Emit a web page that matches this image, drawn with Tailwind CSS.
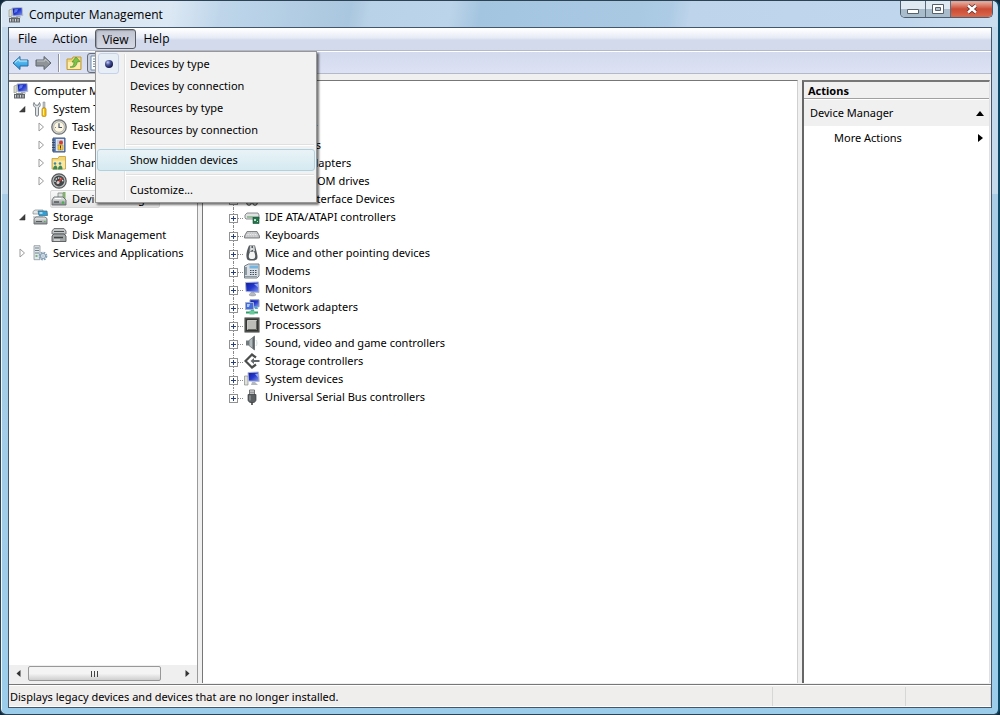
<!DOCTYPE html>
<html lang="en">
<head>
<meta charset="utf-8">
<title>Computer Management</title>
<script src="https://cdn.jsdelivr.net/npm/@tailwindcss/browser@4"></script>
</head>
<body class="h-screen overflow-hidden bg-[#10283c] font-['Noto_Sans','Open_Sans',sans-serif] text-[11px] leading-[18px] text-black">

<svg class="absolute size-0" aria-hidden="true">
  <defs>
    <linearGradient id="scr" x1="0" y1="0" x2="1" y2="1"><stop offset="0" stop-color="#0c1a9c"/><stop offset=".5" stop-color="#2438cc"/><stop offset="1" stop-color="#8fa4f4"/></linearGradient>
    <linearGradient id="metal" x1="0" y1="0" x2="0" y2="1"><stop offset="0" stop-color="#f4f5f5"/><stop offset="1" stop-color="#85898c"/></linearGradient>
    <linearGradient id="blue" x1="0" y1="0" x2="0" y2="1"><stop offset="0" stop-color="#7fd4fb"/><stop offset="1" stop-color="#1a8fdd"/></linearGradient>
    <radialGradient id="ball" cx=".35" cy=".3" r=".7"><stop offset="0" stop-color="#c4cef4"/><stop offset=".45" stop-color="#4a569c"/><stop offset="1" stop-color="#14194c"/></radialGradient>
  </defs>
  <symbol id="i-mgmt" viewBox="0 0 16 16">
    <path d="M1 3l3-1v7l-3 1z" fill="#d9dccb" stroke="#8b8f86" stroke-width=".6"/>
    <path d="M4 1l10-.5.8 8L5 9z" fill="url(#scr)" stroke="#b4bccb" stroke-width="1"/>
    <path d="M6.500 2.200l3.500-.2-1 3-3 1z" fill="#5d78e8"/>
    <path d="M8 9l4-.2 1 1.700H8z" fill="#a9adb4"/>
    <path d="M1 11h11v4.500H1z" fill="#60656a"/><path d="M2.500 12v2.500M5 12v2.500M7.500 12v2.500M10 12v2.500" stroke="#d5d8da"/><path d="M3 10h7v1H3z" fill="#8b9093"/>
  </symbol>
  <symbol id="i-tools" viewBox="0 0 16 16">
    <path d="M2 1.500C.5 4 2 6 3.500 6.500V14c0 1.600 3 1.600 3 0V6.500C8 6 9 4 7.500 1.500L6.300 4.200H3.500z" fill="#dfe3e6" stroke="#70797f" stroke-width=".9"/>
    <path d="M11 1h2v6h-2z" fill="#c0c5c8" stroke="#7d8386" stroke-width=".5"/>
    <rect x="10" y="7" width="4" height="8.500" rx="1.300" fill="#f5c21c" stroke="#b88406" stroke-width=".8"/>
    <path d="M11.500 8v6" stroke="#fff0a4"/>
  </symbol>
  <symbol id="i-clock" viewBox="0 0 16 16">
    <circle cx="8" cy="8" r="7.200" fill="#d9d9d3" stroke="#6f7274" stroke-width="1.300"/><circle cx="8" cy="8" r="5.300" fill="#fcf6e1" stroke="#a3a39c" stroke-width=".7"/>
    <path d="M8 4.200V8.500h3" fill="none" stroke="#46566d" stroke-width="1.200"/><path d="M4 8.500h1" stroke="#888"/>
  </symbol>
  <symbol id="i-event" viewBox="0 0 16 16">
    <path d="M2 1h12v14H2z" fill="#6e8fc4" stroke="#3d5684"/><path d="M5 2h8v12H5z" fill="#dfe6f1"/>
    <path d="M6 4h6M6 6h6M6 8h6" stroke="#8ba3c8" stroke-width=".7"/>
    <path d="M1 3h3M1 5.500h3M1 8h3M1 10.500h3M1 13h3" stroke="#3c4654" stroke-width="1"/>
    <circle cx="10" cy="5.500" r="2" fill="#d53c29"/><path d="M7 8h5v5H7z" fill="#f2cd3d" stroke="#b5871a" stroke-width=".6"/><path d="M9.500 8.500v2.500M9.500 11.500v1" stroke="#6a2b0c" stroke-width="1"/>
  </symbol>
  <symbol id="i-share" viewBox="0 0 16 16">
    <path d="M1 3.500h6l1-2h6.500V14H1z" fill="#f2d574" stroke="#c49c35" stroke-width=".8"/><path d="M2 5.500h12v8H2z" fill="#fbe9a3"/>
    <circle cx="4" cy="8.500" r="1.300" fill="#3f88a2"/><circle cx="9" cy="8.500" r="1.300" fill="#3f88a2"/>
    <path d="M2 14.500c0-3 1.500-4 2.500-4s2 1 2 4zM7 14.500c0-3 1.500-4 2.500-4s2 1 2 4z" fill="#3d8755"/>
  </symbol>
  <symbol id="i-perf" viewBox="0 0 16 16">
    <circle cx="8" cy="8" r="7.200" fill="#bcbfc0" stroke="#535657" stroke-width="1.200"/><circle cx="8" cy="8" r="5.400" fill="#434747"/>
    <path d="M4 9a4 4 0 0 1 8 0" fill="none" stroke="#e4e6e6" stroke-width="1.300" stroke-dasharray="1.500 1"/>
    <path d="M6 11l5-6" stroke="#e53d34" stroke-width="1.400"/><circle cx="7" cy="9.500" r="1.500" fill="#cfd2d3"/>
  </symbol>
  <symbol id="i-devmgr" viewBox="0 0 16 16">
    <path d="M7 2h5v6H7z" fill="#dbe0dc" stroke="#7d8683" stroke-width=".8"/><path d="M12 1h2.500v7H12z" fill="#83b06c"/>
    <path d="M1 9l2-3h9l3 3v5H1z" fill="url(#metal)" stroke="#676c6d" stroke-width=".9"/><path d="M3 11h5" stroke="#3f4445" stroke-width="1.200"/><circle cx="12" cy="11.500" r="1.300" fill="#45b54a"/><path d="M4 7.500h6" stroke="#fff"/>
  </symbol>
  <symbol id="i-storage" viewBox="0 0 16 16">
    <path d="M1 2.500L3 1h8v4H1z" fill="#e3e6e8" stroke="#83898c" stroke-width=".7"/><path d="M6 2h9l.5 4.500H7z" fill="#2da0da" stroke="#42647a" stroke-width=".7"/><path d="M7.500 3h3v2h-3z" fill="#9bdcf8"/>
    <path d="M1 7h10v2H1z" fill="#d0d4d6"/><path d="M2 9.500L4 8h9l2 1.500V15H2z" fill="url(#metal)" stroke="#676d70" stroke-width=".9"/><path d="M4 12.500h6" stroke="#565c5e"/><path d="M12 12h1.500v1H12z" fill="#4fb852"/>
  </symbol>
  <symbol id="i-disk" viewBox="0 0 16 16">
    <path d="M1 4l2-2.500h10L15 4v3H1z" fill="#c4c7c7" stroke="#686c6d" stroke-width=".9"/><path d="M3 4.500h10" stroke="#4c5051"/>
    <path d="M1 9l2-2h10l2 2v5.500H1z" fill="#a4a8a9" stroke="#545859" stroke-width=".9"/><path d="M3 10.500h9" stroke="#404445" stroke-width="1.500"/><path d="M3 13h6" stroke="#f5f5f5"/>
  </symbol>
  <symbol id="i-services" viewBox="0 0 16 16">
    <path d="M2 .7h6v14H2z" fill="#e1e7ea" stroke="#8a969d" stroke-width=".8"/><path d="M3 3h4M3 5.500h4M3 8h4" stroke="#71818b"/><path d="M3.500 11h2" stroke="#54a554" stroke-width="1.500"/>
    <circle cx="11" cy="11" r="3.300" fill="none" stroke="#87a4ba" stroke-width="2.200" stroke-dasharray="1.700 .9"/><circle cx="11" cy="11" r="2.600" fill="#dce6ed" stroke="#7893a8" stroke-width=".8"/><circle cx="11" cy="11" r="1" fill="#fff" stroke="#7893a8" stroke-width=".5"/>
  </symbol>
  <symbol id="i-ide" viewBox="0 0 16 16">
    <path d="M1 6l2-2h11l1 2v4H2L1 9z" fill="#e0e2e2" stroke="#7e8283" stroke-width=".9"/><path d="M3 8h6" stroke="#4c9a58"/><path d="M9 8h6v6.500H9z" fill="#21774a" stroke="#164e32" stroke-width=".6"/><path d="M10 10h2v2h-2zM13 12h1v1h-1z" fill="#c1e0cd"/>
  </symbol>
  <symbol id="i-kbd" viewBox="0 0 16 16">
    <path d="M3 4.500h10l2.500 4.500v2H.5V9z" fill="#b9babd" stroke="#77797c" stroke-width=".9"/><path d="M3.500 6h9M2.500 7.500h11M2 9h12" stroke="#fafafa" stroke-width=".8" stroke-dasharray="1.200 .5"/>
  </symbol>
  <symbol id="i-mouse" viewBox="0 0 16 16">
    <path d="M5 .5C3 5 2 9 2.500 12c.5 3.500 2 3.500 5.500 3.500s5.500-.5 5.500-3.500S12 5 11 .5z" fill="#53595c"/><path d="M6 7c-1 2-1.500 4-1 5.500.5 2 5.500 2 6 0 .5-1.500 0-4-1-6z" fill="#f3f4f4"/><path d="M6 1h1.500v5L5.500 7zM9 1h1.500l.5 5-2 .5z" fill="#ced1d2"/><circle cx="8" cy="4" r="1" fill="#fff"/>
  </symbol>
  <symbol id="i-modem" viewBox="0 0 16 16">
    <path d="M.5 3l4-2H15v12l-2 2H.5z" fill="#d8dee3" stroke="#66737d" stroke-width=".9"/><path d="M5.500 2.500H14v3H5.500z" fill="#75b4df"/><path d="M2 4v8" stroke="#76828a" stroke-width="1.500"/><path d="M6 7.500h7M6 9.500h7M6 11.500h7" stroke="#3e4e5b" stroke-width="1.200" stroke-dasharray="1.500 1"/><path d="M1 13.500h12" stroke="#8e999f"/>
  </symbol>
  <symbol id="i-monitor" viewBox="0 0 16 16">
    <path d="M1.500 1.500L14.500 1l.5 10.500-13-1z" fill="url(#scr)" stroke="#aeb6cb" stroke-width="1"/><path d="M10 3l4-.5v4z" fill="#91a6f7"/><path d="M7 11.500h3l2 2.500c-1.500 1.300-5.500 1.300-7 0z" fill="#b6bac2" stroke="#878b93" stroke-width=".5"/>
  </symbol>
  <symbol id="i-net" viewBox="0 0 16 16">
    <path d="M6 .8h9v7H6z" fill="url(#scr)" stroke="#8b98b7"/><path d="M1.500 3.500h8v7h-8z" fill="#406ce0" stroke="#a6b0c8"/><path d="M3 5h3l-1 3H3z" fill="#b5c9fa"/><path d="M10 8l3-1 1 3h-3z" fill="#4aa4d8"/><path d="M7 11h3v1.500h4v2H2v-2h5z" fill="#2e9e6b"/><path d="M5.500 11.500h5v4h-5z" fill="#69c69b"/>
  </symbol>
  <symbol id="i-cpu" viewBox="0 0 16 16">
    <path d="M.5.500h15v15H.5z" fill="#343635"/><path d="M1.500 1.500h13v13h-13z" fill="none" stroke="#6c6e68" stroke-dasharray="1 1"/><path d="M3.500 3.500h9v9h-9z" fill="#bcbdb8" stroke="#eceeea" stroke-width=".7"/><path d="M12.500 4v8.500H4" fill="none" stroke="#656762"/>
  </symbol>
  <symbol id="i-sound" viewBox="0 0 16 16">
    <path d="M2 5.500h3v5H2z" fill="#737a7e"/><path d="M5 5.500L10.500 1v14L5 10.500z" fill="#b2b9bd" stroke="#6f767a" stroke-width=".8"/><path d="M8.500 3L10.500 1v14l-2-2z" fill="#5d6468"/><path d="M12 5c1.300 2 1.300 4 0 6" stroke="#d3dade" fill="none"/>
  </symbol>
  <symbol id="i-stor" viewBox="0 0 16 16">
    <path d="M12 4.500L8 1.500 1.500 8 8 14.500l4-3" fill="none" stroke="#4b4d4d" stroke-width="2.200"/><path d="M6.500 8L10 5v2h5.500v2H10v2z" fill="#63696a"/>
  </symbol>
  <symbol id="i-sys" viewBox="0 0 16 16">
    <path d="M.5 5h3.500v9H.5z" fill="#dfe1da" stroke="#868a8a" stroke-width=".7"/><path d="M4 1.500L14.500 1l.7 9.500-10.700-.5z" fill="url(#scr)" stroke="#b3bacb"/><path d="M11 3l3-.5v4z" fill="#91a6f7"/><path d="M8 11h3l3 3H7z" fill="#b4b8c0"/>
  </symbol>
  <symbol id="i-usb" viewBox="0 0 16 16">
    <path d="M5.500 1h5v5h-5z" fill="#dfe1e2" stroke="#66696b" stroke-width=".9"/><path d="M7 2.500v2M9 2.500v2" stroke="#555"/><path d="M4 5.500h8V11c0 1.500-2 2.500-2 2.500H6S4 12.500 4 11z" fill="#5b5f61" stroke="#3b3e40" stroke-width=".7"/><path d="M6 6.500v5" stroke="#a4a8aa"/><path d="M8 13v3" stroke="#444" stroke-width="1.600"/>
  </symbol>
  <symbol id="i-hid" viewBox="0 0 16 16">
    <path d="M2 5h12v5H2z" fill="#b5b8ba" stroke="#666"/><circle cx="5" cy="12" r="2.300" fill="#c9cccd" stroke="#3d4042"/><circle cx="11" cy="12" r="2.300" fill="#c9cccd" stroke="#3d4042"/>
  </symbol>
  <symbol id="i-open" viewBox="0 0 8 8"><path d="M7 1.500v5.500H1.500z" fill="#404040" stroke="#222" stroke-width=".5"/></symbol>
  <symbol id="i-shut" viewBox="0 0 8 10"><path d="M2 1l4.500 4L2 9z" fill="#fff" stroke="#9b9b9b"/></symbol>
</svg>

<div class="relative flex h-full flex-col rounded-t-[7px] rounded-b-md border border-[#2d4252] border-r-2 border-r-[#0d4a68] bg-linear-to-b from-[#c3d9ec] from-27% via-[#a9cde6] via-27% to-[#9bcdea] pr-[6px] pb-[6px] pl-[7px] shadow-[inset_1px_1px_0_#eef7fd]">

  <header class="-mr-[5px] -ml-[6px] flex h-[26px] shrink-0 items-center justify-between rounded-t-md bg-[linear-gradient(100deg,#d8e6f3_0%,#dce8f4_17%,#bfd6ea_22%,#a9c7df_35%,#b9d2e7_37%,#bcd4e9_45%,#a4c5e0_48%,#a9c9e3_64%,#adcbe5_67%,#bdd4eb_69%,#c0d6ec_90%,#cbdef0_100%)] pl-[6px]">
    <h1 class="flex items-center gap-[5px] pt-px text-[12px]"><svg class="size-4 shrink-0"><use href="#i-mgmt"/></svg><span class="font-['Open_Sans','Noto_Sans',sans-serif]">Computer Management</span></h1>
    <div class="mr-[4px] flex h-[17px] self-start overflow-hidden rounded-b-[5px] border border-t-0 border-[#4b5d6e]">
      <button type="button" aria-label="Minimize" class="flex w-[25px] items-center justify-center border-r border-[#5c6d7c] bg-linear-to-b from-[#dfe9f1] from-50% to-[#a9bccb] to-50%"><svg class="h-[14px] w-[14px]" viewBox="0 0 14 14"><path d="M1.500 7.500h11v4h-11z" fill="#fff" stroke="#57616c"/></svg></button>
      <button type="button" aria-label="Maximize" class="flex w-[25px] items-center justify-center border-r border-[#5c6d7c] bg-linear-to-b from-[#dfe9f1] from-50% to-[#a9bccb] to-50%"><svg class="h-[14px] w-[14px]" viewBox="0 0 14 14"><path d="M1.500 2.500h11v9h-11z" fill="#fff" stroke="#57616c"/><path d="M4.500 5.500h5v3h-5z" fill="#b5c5d2" stroke="#57616c"/></svg></button>
      <button type="button" aria-label="Close" class="flex w-[41px] items-center justify-center bg-linear-to-b from-[#e3a395] from-10% via-[#cb4a35] via-50% to-[#d96a4e]"><svg class="h-[14px] w-[14px]" viewBox="0 0 14 14"><path d="M3 3.500l8 7M11 3.500l-8 7" stroke="#5c2d2c" stroke-width="4"/><path d="M3 3.500l8 7M11 3.500l-8 7" stroke="#fff" stroke-width="2.400"/></svg></button>
    </div>
  </header>

  <div class="flex min-h-0 flex-1 flex-col border border-[#44576a] bg-[#f0f0f0]">
    <nav class="relative flex h-[23px] shrink-0 items-center border-b border-[#b4b9c9] bg-linear-to-b from-white from-5% via-[#e6eaf5] via-45% to-[#d3daec] to-55% pl-px text-[12px] font-['Open_Sans','Noto_Sans',sans-serif]" aria-label="Menu bar">
      <button type="button" class="h-5 w-[35px]">File</button>
      <button type="button" class="h-5 w-[50px]">Action</button>
      <div class="relative">
        <button type="button" aria-expanded="true" class="h-5 w-[41px] rounded-[3px] border border-[#555a60] bg-linear-to-b from-[#c0c4d0] to-[#d5d9e5] pt-px shadow-[inset_1px_1px_1px_#9499a6]">View</button>
        <div role="menu" class="absolute top-[22px] left-0 z-10 w-[222px] border border-[#979797] bg-[#f1f1f1] p-[1px] text-[11px] font-['Noto_Sans','Open_Sans',sans-serif] shadow-[2px_2px_2px_#00000088] before:absolute before:top-[2px] before:bottom-[2px] before:left-[28px] before:w-[2px] before:border-l before:border-[#e0e0e0] before:bg-white">
          <button type="button" role="menuitemradio" aria-checked="true" class="relative flex h-[22px] w-full items-center pl-[33px]"><span class="absolute top-0 left-[1px] flex size-[21px] items-center justify-center rounded-[3px] border border-[#c5d3ea] bg-[#e8eef6]"><svg class="size-[8px]" viewBox="0 0 8 8"><circle cx="4" cy="4" r="4" fill="url(#ball)"/></svg></span>Devices by type</button>
          <button type="button" role="menuitemradio" class="flex h-[22px] w-full items-center pl-[33px]">Devices by connection</button>
          <button type="button" role="menuitemradio" class="flex h-[22px] w-full items-center pl-[33px]">Resources by type</button>
          <button type="button" role="menuitemradio" class="flex h-[22px] w-full items-center pl-[33px]">Resources by connection</button>
          <div class="my-[3px] mr-[1px] ml-[28px] h-[2px] border-t border-[#e0e0e0] bg-white"></div>
          <button type="button" role="menuitem" class="relative flex h-[22px] w-full items-center rounded-[3px] border border-[#afd2de] bg-linear-to-b from-[#e9f3f7] to-[#d5eaf1] pl-[32px]">Show hidden devices</button>
          <div class="my-[3px] mr-[1px] ml-[28px] h-[2px] border-t border-[#e0e0e0] bg-white"></div>
          <button type="button" role="menuitem" class="flex h-[22px] w-full items-center pl-[33px]">Customize...</button>
        </div>
      </div>
      <button type="button" class="h-5 w-[41px]">Help</button>
    </nav>

    <div role="toolbar" aria-label="Tools" class="flex h-[23px] shrink-0 items-center border-t border-b border-t-white border-b-[#b4b9c9] bg-linear-to-b from-[#d3daed] to-[#dde2f4] pl-[3px]">
      <button type="button" aria-label="Back" class="mr-[6px]"><svg class="h-4 w-[17px]" viewBox="0 0 17 16"><path d="M1 8l7-6.500V5h8v6H8v3.500z" fill="url(#blue)" stroke="#2b6ca0"/><path d="M3 7.500l4-3.500v2h8" fill="none" stroke="#c2ecff"/></svg></button>
      <button type="button" aria-label="Forward"><svg class="h-4 w-[17px]" viewBox="0 0 17 16"><path d="M16 8L9 1.500V5H1v6h8v3.500z" fill="#8f9499" stroke="#5f666d"/><path d="M14 7.500L10 4v2H2" fill="none" stroke="#c3c7cb"/></svg></button>
      <span class="mx-[6px] h-[18px] w-[2px] border-l border-[#8c93a3] bg-white"></span>
      <button type="button" aria-label="Up one level"><svg class="h-4 w-[17px]" viewBox="0 0 17 16"><path d="M1 4h5l1-2h8v12.500H1z" fill="#f4d877" stroke="#c09a3a"/><path d="M2 7h12v7H2z" fill="#fcecae"/><path d="M4 12c3 0 4-2 4-5H6l4-5 4 4.500-3 .5c0 4-3 6-7 5z" fill="#7cc24d" stroke="#4d9327" stroke-width=".7"/></svg></button>
      <button type="button" aria-label="Show console tree" class="ml-[4px] flex h-5 w-[24px] items-center justify-center rounded-[3px] border border-[#666c75] bg-[#c9cfdf]"><svg class="size-[18px]" viewBox="0 0 18 18"><path d="M1 2h16v14H1z" fill="#fff" stroke="#6e8cab"/><path d="M3 5h5M3 7.500h5M3 10h5M3 12.500h5" stroke="#698caf"/></svg></button>
    </div>

    <main class="grid min-h-0 flex-1 grid-cols-[189px_minmax(0,1fr)_188px] gap-[4px] pt-[6px] pr-px pb-[1px]">
      <section aria-label="Console tree" class="flex min-h-0 flex-col overflow-hidden border-t-2 border-r border-t-[#777] border-r-[#9a9a9a] bg-white">
        <ul class="min-h-0 flex-1 overflow-hidden whitespace-nowrap">
          <li class="flex h-[18px] items-center gap-[5px] pl-[4px]"><svg class="size-4 shrink-0"><use href="#i-mgmt"/></svg>Computer Management (Local)</li>
          <li class="flex h-[18px] items-center pl-[9px]"><svg class="mr-[6px] size-[8px] shrink-0"><use href="#i-open"/></svg><svg class="mr-[5px] size-4 shrink-0"><use href="#i-tools"/></svg>System Tools</li>
          <li class="flex h-[18px] items-center pl-[28px]"><svg class="mr-[6px] h-[10px] w-[8px] shrink-0"><use href="#i-shut"/></svg><svg class="mr-[5px] size-4 shrink-0"><use href="#i-clock"/></svg>Task Scheduler</li>
          <li class="flex h-[18px] items-center pl-[28px]"><svg class="mr-[6px] h-[10px] w-[8px] shrink-0"><use href="#i-shut"/></svg><svg class="mr-[5px] size-4 shrink-0"><use href="#i-event"/></svg>Event Viewer</li>
          <li class="flex h-[18px] items-center pl-[28px]"><svg class="mr-[6px] h-[10px] w-[8px] shrink-0"><use href="#i-shut"/></svg><svg class="mr-[5px] size-4 shrink-0"><use href="#i-share"/></svg>Shared Folders</li>
          <li class="flex h-[18px] items-center pl-[28px]"><svg class="mr-[6px] h-[10px] w-[8px] shrink-0"><use href="#i-shut"/></svg><svg class="mr-[5px] size-4 shrink-0"><use href="#i-perf"/></svg>Reliability and Performance</li>
          <li class="flex h-[18px] items-center pl-[41px]"><span class="flex h-[18px] items-center rounded-[2px] border border-[#d9d9d9] bg-linear-to-b from-[#f8f8f8] to-[#e5e5e5] pr-[4px]"><svg class="mr-[5px] size-4 shrink-0"><use href="#i-devmgr"/></svg>Device Manager</span></li>
          <li class="flex h-[18px] items-center pl-[9px]"><svg class="mr-[6px] size-[8px] shrink-0"><use href="#i-open"/></svg><svg class="mr-[5px] size-4 shrink-0"><use href="#i-storage"/></svg>Storage</li>
          <li class="flex h-[18px] items-center pl-[42px]"><svg class="mr-[5px] size-4 shrink-0"><use href="#i-disk"/></svg>Disk Management</li>
          <li class="flex h-[18px] items-center pl-[9px]"><svg class="mr-[6px] h-[10px] w-[8px] shrink-0"><use href="#i-shut"/></svg><svg class="mr-[5px] size-4 shrink-0"><use href="#i-services"/></svg>Services and Applications</li>
        </ul>
        <div class="flex h-[17px] shrink-0 items-center bg-[#efefef]">
          <button type="button" aria-label="Scroll left" class="flex h-full w-[19px] items-center justify-center"><svg class="size-[7px]" viewBox="0 0 7 7"><path d="M5.500 0v7L1.500 3.500z" fill="#333"/></svg></button>
          <span class="flex h-[15px] w-[133px] items-center justify-center gap-[2px] rounded-[2px] border border-[#989898] bg-linear-to-b from-[#f4f4f4] from-50% to-[#cfcfcf]"><i class="h-[6px] w-px bg-[#444]"></i><i class="h-[6px] w-px bg-[#444]"></i><i class="h-[6px] w-px bg-[#444]"></i></span>
          <button type="button" aria-label="Scroll right" class="ml-auto flex h-full w-[19px] items-center justify-center"><svg class="size-[7px]" viewBox="0 0 7 7"><path d="M1.500 0v7l4-3.500z" fill="#333"/></svg></button>
        </div>
        <div class="h-px shrink-0 bg-[#f0f0f0]"></div>
      </section>

      <section aria-label="Devices" class="min-h-0 overflow-hidden border-t border-r border-l border-t-[#777] border-r-[#d0d0d0] border-l-[#777] bg-white pt-px">
        <ul class="whitespace-nowrap pl-[22px]" id="devices">
          <li class="flex h-[18px] items-center gap-[5px]"><svg class="size-4 shrink-0"><use href="#i-sys"/></svg>PC</li>
        </ul>
      </section>

      <aside aria-label="Actions" class="flex flex-col border-t-2 border-r border-l-2 border-t-[#777] border-r-[#e0e0e0] border-l-[#666] bg-white">
        <h2 class="h-[17px] border-b border-[#a0a0a0] bg-[#f0f0f0] pl-[4px] font-bold leading-[17px]">Actions</h2>
        <button type="button" class="flex h-[27px] items-center justify-between border-t border-white bg-[#f0f0f0] pr-[5px] pl-[6px]">Device Manager<svg class="h-[5px] w-[8px]" viewBox="0 0 8 5"><path d="M4 0l4 5H0z"/></svg></button>
        <button type="button" class="flex h-[23px] items-center justify-between pr-[6px] pl-[30px]">More Actions<svg class="h-[8px] w-[5px]" viewBox="0 0 5 8"><path d="M0 0l5 4-5 4z"/></svg></button>
      </aside>
    </main>

    <footer class="flex h-[23px] shrink-0 items-center border-t border-[#777] bg-[#f0eded] shadow-[inset_0_1px_0_#fff,inset_0_-1px_0_#fff]">
      <p class="flex-1 pt-px pl-[1px]">Displays legacy devices and devices that are no longer installed.</p>
      <span class="h-[19px] w-[133px] border-l border-[#d7d7d7]"></span>
      <span class="h-[19px] w-[86px] border-x border-[#d7d7d7]"></span>
    </footer>
  </div>
</div>

<template id="row">
  <li class="relative flex h-[18px] items-center pl-[4px] before:absolute before:top-0 before:left-[8px] before:h-full before:border-l before:border-dotted before:border-[#8a8a8a] last:before:h-[9px]">
    <button type="button" aria-label="Expand" class="relative mt-[2px] flex size-[9px] items-center justify-center border border-[#929292] bg-white"><svg class="size-[5px]" viewBox="0 0 5 5"><path d="M0 2.500h5M2.500 0v5" stroke="#2b3f78"/></svg></button>
    <i class="mt-[2px] mr-[1px] w-[5px] border-t border-dotted border-[#8a8a8a]"></i>
    <svg class="mr-[5px] size-4 shrink-0"><use/></svg>
    <span></span>
  </li>
</template>
<script>
  const list = document.getElementById('devices');
  const row = document.getElementById('row');
  [['devmgr', 'Batteries'], ['sys', 'Computer'], ['disk', 'Disk drives'], ['monitor', 'Display adapters'],
   ['disk', 'DVD/CD-ROM drives'], ['hid', 'Human Interface Devices'], ['ide', 'IDE ATA/ATAPI controllers'],
   ['kbd', 'Keyboards'], ['mouse', 'Mice and other pointing devices'], ['modem', 'Modems'], ['monitor', 'Monitors'],
   ['net', 'Network adapters'], ['cpu', 'Processors'], ['sound', 'Sound, video and game controllers'],
   ['stor', 'Storage controllers'], ['sys', 'System devices'], ['usb', 'Universal Serial Bus controllers']
  ].forEach(([icon, name]) => {
    const li = row.content.cloneNode(true);
    li.querySelector('use').setAttribute('href', '#i-' + icon);
    li.querySelector('span').textContent = name;
    list.append(li);
  });
</script>
</body>
</html>
